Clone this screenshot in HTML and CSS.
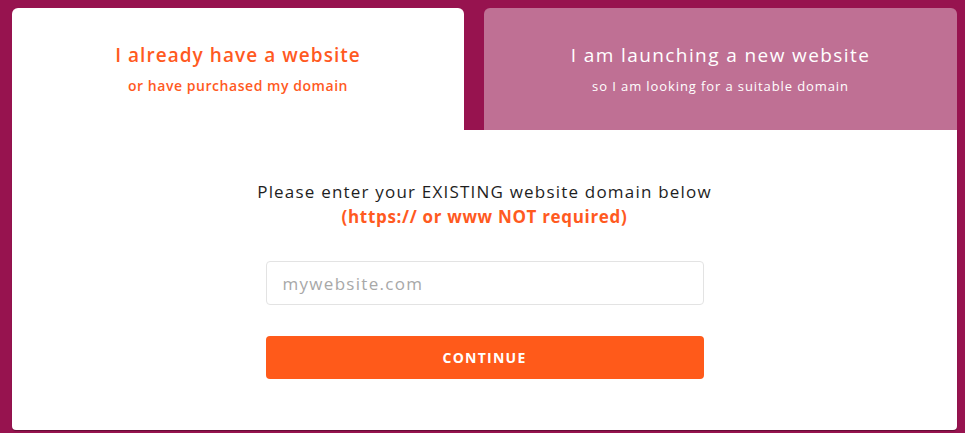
FILE: index.html
```html
<!DOCTYPE html>
<html lang="en">
<head>
<meta charset="utf-8">
<title>Domain</title>
<link rel="stylesheet" href="styles.css">
</head>
<body>
<div class="page">
  <div class="tabs">
    <div class="tab tab-active">
      <div class="tab-title">I already have a website</div>
      <div class="tab-sub">or have purchased my domain</div>
    </div>
    <div class="tab tab-inactive">
      <div class="tab-title">I am launching a new website</div>
      <div class="tab-sub">so I am looking for a suitable domain</div>
    </div>
  </div>
  <div class="panel">
    <p class="prompt">Please enter your EXISTING website domain below</p>
    <p class="note">(https:// or www NOT required)</p>
    <form class="form">
      <input class="field" type="text" placeholder="mywebsite.com">
      <button class="btn" type="button">CONTINUE</button>
    </form>
  </div>
</div>
</body>
</html>
```

FILE: styles.css
```css
html, body {
  margin: 0;
  padding: 0;
}
body {
  background: #97134f;
  font-family: "Open Sans", "Liberation Sans", sans-serif;
  height: 433px;
  overflow: hidden;
}
.page {
  padding: 8px 8px 0 12px;
}
.tabs {
  display: grid;
  grid-template-columns: 452px 1fr;
  column-gap: 20px;
}
.tab {
  height: 122px;
  border-radius: 6px 6px 0 0;
  display: flex;
  flex-direction: column;
  align-items: center;
  box-sizing: border-box;
  padding-top: 33px;
}
.tab-active {
  background: #fff;
  color: #ff5a1f;
}
.tab-inactive {
  background: #bf7094;
  color: #fff;
}
.tab-title {
  font-size: 19px;
  line-height: 28px;
  letter-spacing: 1.05px;
}
.tab-active .tab-title {
  font-weight: 600;
}
.tab-inactive .tab-title {
  letter-spacing: 1.4px;
}
.tab-sub {
  font-size: 14px;
  line-height: 20px;
  margin-top: 7px;
  letter-spacing: 0.55px;
}
.tab-active .tab-sub {
  font-weight: 600;
}
.tab-inactive .tab-sub {
  font-size: 13px;
  letter-spacing: 0.9px;
}
.panel {
  background: #fff;
  height: 300px;
  border-radius: 0 0 4px 4px;
  box-shadow: 0 1px 1px rgba(0,0,0,0.35);
  display: flex;
  flex-direction: column;
  align-items: center;
  padding-top: 49px;
  box-sizing: border-box;
}
.prompt {
  margin: 0;
  font-size: 17px;
  line-height: 25px;
  color: #1e1e1e;
  letter-spacing: 1.2px;
}
.note {
  margin: 0;
  font-size: 17px;
  line-height: 25px;
  font-weight: 700;
  color: #ff5a1f;
  letter-spacing: 0.67px;
}
.form {
  margin-top: 32px;
  display: flex;
  flex-direction: column;
  width: 438px;
  gap: 31px;
}
.field {
  height: 44px;
  box-sizing: border-box;
  border: 1px solid #e3e3e3;
  border-radius: 4px;
  padding: 0 16px;
  font-family: inherit;
  font-size: 17px;
  color: #333;
  letter-spacing: 1.3px;
  outline: none;
}
.field::placeholder {
  color: #a8a8a8;
}
.btn {
  height: 43px;
  border: none;
  border-radius: 4px;
  background: #ff5a1a;
  color: #fff;
  font-family: inherit;
  font-weight: 700;
  font-size: 14px;
  letter-spacing: 1.25px;
}
```
